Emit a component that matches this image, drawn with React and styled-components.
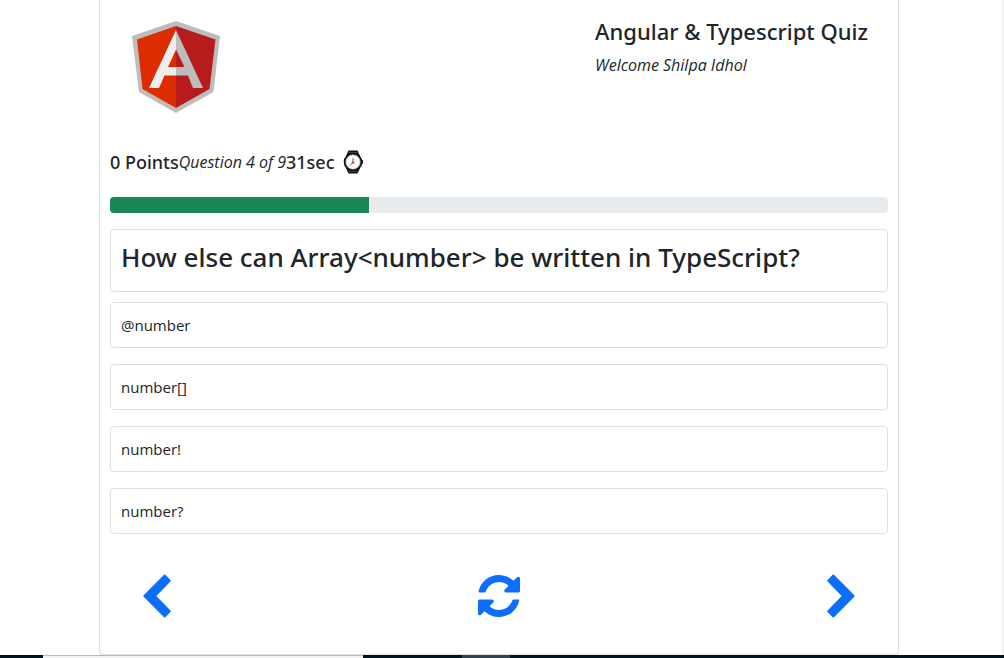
import React from "react";
import styled, { createGlobalStyle } from "styled-components";

const GlobalStyle = createGlobalStyle`
  *, *::before, *::after { box-sizing: border-box; }
  body {
    margin: 0;
    background: #fff;
    color: #212529;
    font-family: "Segoe UI", "Open Sans", "Noto Sans", sans-serif;
    font-size: 16px;
    line-height: 24px;
  }
  h1, h2, p, ul { margin: 0; padding: 0; }
`;

const headingFont = `"Segoe UI", "Noto Sans", "Open Sans", sans-serif`;

const Page = styled.div`
  min-height: 100vh;
  display: flex;
  flex-direction: column;
`;

const Content = styled.main`
  flex: 1;
  border-right: 2px solid #f1f1f1;
  padding-right: 4px;
`;

const Card = styled.section`
  max-width: 800px;
  margin: 0 auto;
  padding: 0 10px 34px;
  border: 1px solid #dfdfdf;
  border-top: 0;
  border-radius: 0 0 4px 4px;
`;

const Header = styled.header`
  display: flex;
  justify-content: space-between;
  padding: 16px 20px 32px 16px;
`;

const Logo = styled.svg`
  width: 100px;
  height: 100px;
`;

const Intro = styled.div`
  display: flex;
  flex-direction: column;
  gap: 7px;
`;

const Title = styled.h1`
  font-family: ${headingFont};
  font-size: 22px;
  line-height: 30px;
  font-weight: 500;
`;

const Welcome = styled.p`
  font-style: italic;
  font-size: 16px;
`;

const Status = styled.div`
  display: flex;
  align-items: center;
  height: 28px;
`;

const Strong = styled.span`
  font-family: ${headingFont};
  font-size: 18px;
  font-weight: 500;
`;

const Counter = styled.span`
  font-style: italic;
  font-size: 16px;
`;

const Watch = styled.svg`
  width: 20px;
  height: 24px;
  margin-left: 8px;
`;

const Progress = styled.div`
  height: 16px;
  margin: 21px 0 16px;
  border-radius: 4px;
  background: #e9ecef;
  overflow: hidden;
`;

const Bar = styled.div`
  height: 100%;
  background: #198754;
`;

const Question = styled.h2`
  padding: 10px 10px 17px;
  border: 1px solid #dfdfdf;
  border-radius: 4px;
  font-family: ${headingFont};
  font-size: 26px;
  line-height: 34px;
  font-weight: 500;
`;

const Options = styled.ul`
  display: flex;
  flex-direction: column;
  gap: 16px;
  margin-top: 10px;
  list-style: none;
`;

const Option = styled.button`
  display: block;
  width: 100%;
  padding: 10px;
  border: 1px solid #dfdfdf;
  border-radius: 4px;
  background: #fff;
  color: inherit;
  font: inherit;
  font-size: 15px;
  line-height: 24px;
  text-align: left;
  cursor: pointer;
`;

const Controls = styled.nav`
  display: flex;
  justify-content: space-between;
  margin-top: 38px;
  padding: 0 26px;
`;

const IconButton = styled.button`
  display: flex;
  align-items: center;
  justify-content: center;
  width: 42px;
  height: 48px;
  padding: 0;
  border: 0;
  background: none;
  color: #0d6efd;
  cursor: pointer;
`;

const Taskbar = styled.footer`
  display: flex;
  height: 3px;
  background: #001420;
`;

const Search = styled.div`
  flex: 0 0 320px;
  margin-left: 43px;
  border-top: 1px solid #bbb;
  background: #f2f2f2;
`;

const ActiveApp = styled.div`
  flex: 0 0 48px;
  margin-left: 99px;
  background: #33434e;
`;

const answers = ["@number", "number[]", "number!", "number?"];

function Chevron({ path }) {
  return (
    <svg width="28" height="44" viewBox="0 0 28 44" aria-hidden="true">
      <path d={path} fill="currentColor" stroke="currentColor" strokeWidth="2" strokeLinejoin="round" />
    </svg>
  );
}

function Refresh() {
  return (
    <svg width="42" height="42" viewBox="0 0 1536 1536" fill="currentColor" aria-hidden="true">
      <path d="M1511 928q0 5-1 7-64 268-268 434.500t-478 166.500q-146 0-282.500-55t-243.500-157l-129 129q-19 19-45 19t-45-19-19-45v-448q0-26 19-45t45-19h448q26 0 45 19t19 45-19 45l-137 137q71 66 161 102t187 36q134 0 250-65t186-179q11-17 53-117 8-23 30-23h192q13 0 22.500 9.500t9.500 22.500zM1536 128v448q0 26-19 45t-45 19h-448q-26 0-45-19t-19-45 19-45l138-138q-148-137-349-137-134 0-250 65t-186 179q-11 17-53 117-8 23-30 23h-199q-13 0-22.500-9.500t-9.500-22.500v-7q65-268 270-434.500t480-166.500q146 0 284 55.500t245 156.500l130-129q19-19 45-19t45 19 19 45z" />
    </svg>
  );
}

export default function App() {
  return (
    <Page>
      <GlobalStyle />
      <Content>
        <Card>
          <Header>
            <Logo viewBox="0 0 100 100" role="img" aria-label="Angular">
              <path d="M50 5 94 20 87.500 76 50 97 13 76 6 20Z" fill="#bdbdbd" />
              <path d="M50 10 11 23.500 16.500 73 50 92Z" fill="#dd2c00" />
              <path d="M50 10 89.500 23.500 83.500 73 50 92Z" fill="#b71c1c" />
              <path d="M50 14 23 72H33L38.500 59.500H50V51H42L50 33.500Z" fill="#eee" />
              <path d="M50 14 77 72H67L62 59.500H50V51H58.500L50 33.500Z" fill="#bdbdbd" />
            </Logo>
            <Intro>
              <Title>Angular &amp; Typescript Quiz</Title>
              <Welcome>Welcome Shilpa Idhol</Welcome>
            </Intro>
          </Header>
          <Status>
            <Strong>0 Points</Strong>
            <Counter>Question 4 of 9</Counter>
            <Strong>31sec</Strong>
            <Watch viewBox="0 0 20 24" aria-hidden="true">
              <path d="M5 1.500Q5 .5 6 .5H14Q15 .5 15 1.500L17 6V18L15 22.500Q15 23.500 14 23.500H6Q5 23.500 5 22.500L3 18V6Z" fill="#111" />
              <path d="M5.500 2.500H14.500M5.500 21.500H14.500" stroke="#444" />
              <rect x="17.500" y="10" width="2.500" height="4" rx="1" fill="#111" />
              <circle cx="10" cy="12" r="8.300" fill="#fff" stroke="#111" strokeWidth="2" />
              <circle cx="10" cy="12" r="7.200" fill="none" stroke="#999" strokeWidth=".7" />
              <path d="M10 12.500 7 15.500M10 12.500V8" stroke="#555" strokeWidth=".9" />
              <circle cx="10" cy="12.500" r="1.300" fill="#f03a17" />
            </Watch>
          </Status>
          <Progress role="progressbar" aria-label="Quiz progress" aria-valuenow={33}>
            <Bar style={{ width: `${(3 / 9) * 100}%` }} />
          </Progress>
          <Question>How else can Array&lt;number&gt; be written in TypeScript?</Question>
          <Options>
            {answers.map((answer) => (
              <li key={answer}>
                <Option type="button">{answer}</Option>
              </li>
            ))}
          </Options>
          <Controls aria-label="Quiz controls">
            <IconButton type="button" aria-label="Previous question">
              <Chevron path="M1.400 22 21.700 1.500 26.700 6.700 11.900 22 26.700 37.300 21.700 42.500Z" />
            </IconButton>
            <IconButton type="button" aria-label="Restart quiz">
              <Refresh />
            </IconButton>
            <IconButton type="button" aria-label="Next question">
              <Chevron path="M26.600 22 6.300 1.500 1.300 6.700 16.100 22 1.300 37.300 6.300 42.500Z" />
            </IconButton>
          </Controls>
        </Card>
      </Content>
      <Taskbar>
        <Search />
        <ActiveApp />
      </Taskbar>
    </Page>
  );
}
